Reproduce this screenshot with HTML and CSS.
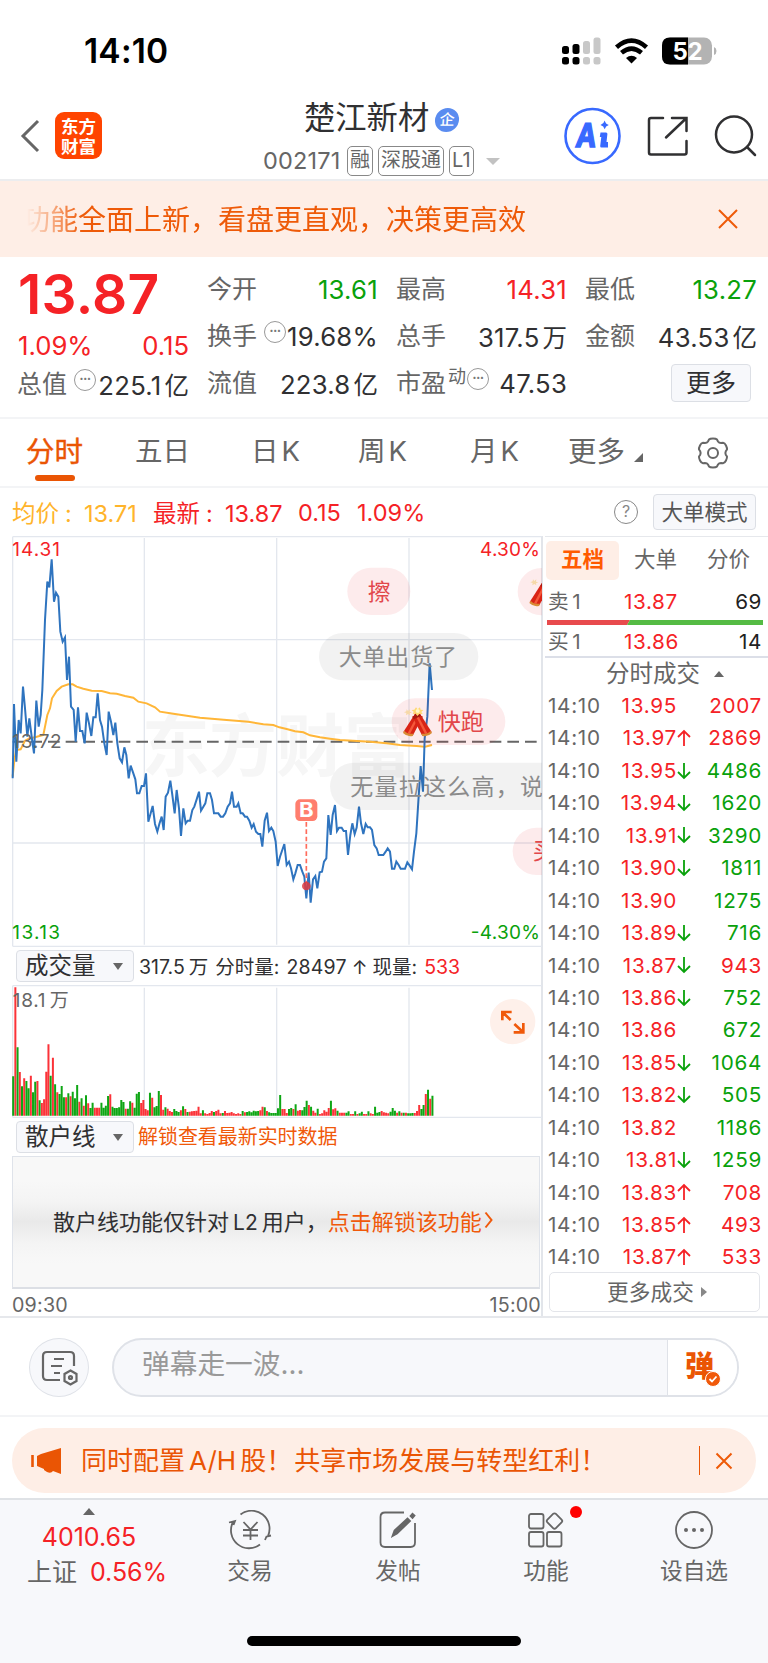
FILE: index.html
```html
<!DOCTYPE html>
<html lang="zh-CN">
<head>
<meta charset="utf-8">
<title>楚江新材 002171</title>
<link rel="stylesheet" href="styles.css">
</head>
<body>
<div class="status">
  <span class="clock">14:10</span>
  <svg class="status-icons" viewBox="0 0 170 34" width="170" height="34">
    <g fill="#000"><rect x="4" y="12" width="7" height="8" rx="2.5"/><rect x="14.500" y="10" width="7" height="10" rx="2.500"/><rect x="4" y="23" width="7" height="7.500" rx="2.500"/><rect x="14.500" y="23" width="7" height="7.500" rx="2.500"/></g>
    <g fill="#c8c8c8"><rect x="25" y="7" width="7" height="13" rx="2.500"/><rect x="35.500" y="3.500" width="7" height="16.500" rx="2.500"/><rect x="25" y="23" width="7" height="7.500" rx="2.500"/><rect x="35.500" y="23" width="7" height="7.500" rx="2.500"/></g>
    <g fill="none" stroke="#000" stroke-width="4.600"><path d="M58.500 13.300Q73.500 0 88.500 13.300"/><path d="M63.500 18.800Q73.500 10.500 83.500 18.800"/></g>
    <path d="M68 24Q73.500 19.500 79 24L73.500 29.500Z"/>
    <rect x="104" y="3.500" width="50" height="27" rx="8" fill="#b3b3b3"/>
    <path d="M130 3.500H112Q104 3.500 104 11.500V22.500Q104 30.500 112 30.500H130Z"/>
    <path d="M156 13Q158.500 14 158.500 17T156 21Z" fill="#b3b3b3"/>
    <text x="114.500" y="25.500" class="battery" textLength="30">52</text>
  </svg>
</div>

<header class="header">
  <svg class="back" width="22" height="36" viewBox="0 0 22 36"><path d="M18 3L3 18 18 33"/></svg>
  <div class="logo"><span>东方</span><span>财富</span></div>
  <div class="title">
    <div class="name"><span>楚江新材</span><i class="badge">企</i></div>
    <div class="code"><span class="num">002171</span><b>融</b><b>深股通</b><b>L1</b><i class="tri-down"></i></div>
  </div>
  <svg class="actions" width="208" height="64" viewBox="0 0 208 64">
    <circle cx="32.500" cy="32" r="27" fill="none" stroke="#3869ff" stroke-width="2.600"/>
    <text transform="translate(15.500 42.500) skewX(-7) scale(.84 1)" class="ai">A</text>
    <path d="M40.500 28.500H46Q47.500 28.500 47.400 30L46.500 38H48V43.500H41.500Q40 43.500 40.200 42L41.300 33H39.800Z" fill="#3869ff"/>
    <path d="M44.700 16.500Q45.500 20 48.800 21 45.500 22 44.700 25.300 43.800 22 40.500 21 43.800 20 44.700 16.500Z" fill="#3869ff"/>
    <g fill="none" stroke="#303032" stroke-width="2.500" stroke-linecap="round"><path d="M103 14H91Q89 14 89 16V48.500Q89 50.500 91 50.500H124.500Q126.500 50.500 126.500 48.500V37M112 14H126.500V27M126.500 14L106 33.500"/><circle cx="174" cy="30.500" r="18"/><path d="M187 43L195 51"/></g>
  </svg>
</header>

<div class="notice">
  <span class="notice-text">功能全面上新，看盘更直观，决策更高效</span>
  <svg width="22" height="22" viewBox="0 0 22 22" class="close"><path d="M2 2L20 20M20 2L2 20"/></svg>
</div>

<section class="quote">
  <div class="q-main">
    <div class="price">13.87</div>
    <div class="pair red change"><span>1.09%</span><span>0.15</span></div>
    <div class="pair"><label>总值</label><i class="dots">•••</i><span>225.1<em>亿</em></span></div>
  </div>
  <div class="q-col">
    <div class="pair green"><label>今开</label><span>13.61</span></div>
    <div class="pair"><label>换手</label><i class="dots mid">•••</i><span>19.68%</span></div>
    <div class="pair"><label>流值</label><span>223.8<em>亿</em></span></div>
  </div>
  <div class="q-col">
    <div class="pair red"><label>最高</label><span>14.31</span></div>
    <div class="pair"><label>总手</label><span>317.5<em>万</em></span></div>
    <div class="pair"><label>市盈<sup>动</sup></label><i class="dots tight">•••</i><span>47.53</span></div>
  </div>
  <div class="q-col">
    <div class="pair green"><label>最低</label><span>13.27</span></div>
    <div class="pair"><label>金额</label><span>43.53<em>亿</em></span></div>
    <div class="pair"><button class="btn more">更多</button></div>
  </div>
</section>

<nav class="tabs">
  <span class="tab active">分时</span><span class="tab">五日</span><span class="tab">日<u>K</u></span><span class="tab">周<u>K</u></span><span class="tab">月<u>K</u></span><span class="tab tab-more">更多<i></i></span>
  <svg width="34" height="34" viewBox="0 0 34 34" class="gear"><path d="M13 3.500Q14 2.500 17 2.500T21 3.500L22 5.500Q23 7 25 7L27 6.800Q28.800 7 30 9.500T31 13.500L29.800 15.300Q29 17 29.800 18.700L31 20.500Q31.200 22 30 24.500T27 27.200L25 27Q23 27 22 28.500L21 30.500Q20 31.500 17 31.500T13 30.500L12 28.500Q11 27 9 27L7 27.200Q5.200 27 4 24.500T3 20.500L4.200 18.700Q5 17 4.200 15.300L3 13.500Q2.800 12 4 9.500T7 6.800L9 7Q11 7 12 5.500Z"/><circle cx="17" cy="17" r="5"/></svg>
</nav>

<div class="info">
  <span class="yellow avg">均价<s>:</s>13.71</span>
  <span class="red latest">最新<s>:</s>13.87</span><span class="red v2">0.15</span><span class="red v3">1.09%</span>
  <i class="help">?</i><button class="btn mode">大单模式</button>
</div>

<main class="board">
  <div class="left">
    <svg class="chart" width="542" height="412" viewBox="0 18 1626 1236">
      <defs>
        <g id="cracker">
          <path d="M14 8L18 13 24 8 23 15 30 17 23 20 24 26 18 22 12 26 13 19 6 17 13 14Z" fill="#f6d9a8"/>
          <g id="tube"><path d="M40 20L62 30 33 86Q20 90 4 76Z" fill="#d92416"/><path d="M46 24L52 27 24 82 17 80Z" fill="#f5583a"/><path d="M40 20L62 30 58 38 36 28Z" fill="#a81a10"/><path d="M7 72Q18 84 35 81L32 88Q16 92 3 79Z" fill="#d98b34"/></g>
        </g>
      </defs>
      <text x="425" y="722" class="watermark" textLength="810">东方财富</text>
      <g class="grid"><path d="M38 20H1626M38 1249H1626M38 20V1249M433 24V1244M830 24V1244M1227 24V1244M38 329H1626M38 939H1626"/></g>
      <path class="base" d="M38 635H1616"/>
      <polyline class="avgline" points="38,740 42,700 48,660 62,658 75,632 88,625 105,622 130,615 142,555 150,535 156,505 170,483 185,470 205,463 218,463 230,470 250,476 275,482 305,483 330,490 350,491 375,498 400,503 415,515 440,520 465,532 480,545 520,551 600,563 680,570 745,575 790,583 820,585 838,592 860,597 885,604 910,607 930,616 960,622 990,626 1020,630 1110,635 1160,640 1200,645 1250,648 1275,650 1296,645"/>
      <polyline class="priceline" points="38,745 42,522 49,695 56,570 62,610 69,470 75,535 82,620 88,565 95,620 102,670 109,512 116,590 122,555 127,480 135,270 142,155 148,172 155,88 162,215 168,188 175,200 181,305 188,335 195,322 201,450 207,380 213,530 221,540 227,635 234,532 240,603 247,603 254,640 260,548 267,580 274,618 280,562 287,562 293,490 300,570 306,590 313,640 320,675 326,545 333,575 340,615 346,578 352,640 359,685 366,697 373,652 379,675 386,745 392,707 399,727 406,748 411,790 418,790 425,768 432,768 438,730 445,875 452,850 458,828 465,882 472,905 478,882 485,860 491,900 497,800 504,788 511,752 517,795 524,850 530,780 537,835 543,918 550,835 557,880 563,872 570,872 577,840 583,830 590,808 597,785 603,842 610,830 616,820 622,790 630,790 636,810 642,850 655,850 662,860 669,860 676,850 683,830 690,820 696,785 702,830 710,830 715,820 722,850 728,850 735,860 741,860 748,872 755,893 761,882 768,905 775,912 781,912 787,950 794,872 801,848 807,903 814,893 820,903 827,935 833,1008 840,980 853,942 860,1005 867,995 873,1015 880,1048 886,1030 893,1005 900,1005 907,1025 913,1040 919,1105 926,1028 932,1118 939,1048 946,1038 952,1075 959,1027 966,1025 972,995 979,985 985,855 992,915 998,855 1005,825 1011,903 1017,893 1025,893 1031,903 1038,903 1044,975 1051,915 1057,880 1064,912 1070,893 1077,830 1083,880 1090,912 1097,882 1103,892 1110,892 1116,900 1123,945 1130,955 1136,975 1150,975 1157,965 1163,955 1170,965 1176,1016 1183,1016 1189,995 1196,1005 1202,1016 1215,1016 1222,997 1229,1007 1236,1018 1242,965 1249,910 1255,815 1262,708 1269,785 1274,625 1282,560 1289,400 1296,480"/>
      <path d="M919 876V1060" stroke="#ff6b5b" stroke-width="5" stroke-dasharray="14 8"/>
      <circle cx="919" cy="1068" r="13" fill="#df3b40" opacity=".85"/>
      <rect x="886" y="808" width="66" height="65" rx="14" fill="#ff7e6d"/>
      <text x="897" y="862" class="buy" textLength="44" lengthAdjust="spacingAndGlyphs">B</text>
      <g fill="#e6141e" fill-opacity=".085"><rect x="1042" y="113" width="189" height="142" rx="71"/><rect x="1175" y="505" width="341" height="140" rx="70"/><rect x="1553" y="114" width="300" height="142" rx="71"/><rect x="1538" y="893" width="300" height="142" rx="71"/></g>
      <g fill="#000" fill-opacity=".05"><rect x="957" y="309" width="478" height="142" rx="71"/><rect x="990" y="698" width="900" height="142" rx="71"/></g>
      <g class="barrage"><text x="1103" y="210" fill="#e2474b">擦</text><text x="1016" y="405" textLength="355">大单出货了</text><text x="1313" y="601" fill="#e2474b" textLength="138">快跑</text><text x="1051" y="795" textLength="578">无量拉这么高，说</text><text x="1598" y="988" fill="#e2474b">买</text></g>
      <g transform="translate(1206 530)"><use href="#cracker"/><use href="#tube" transform="matrix(-1 0 0 1 93 0)"/><path d="M42 2L47 8 54 2 56 9 64 10 58 16 62 22 52 22 46 28 41 21 32 22 35 15 29 10 37 9Z" fill="#ffd873"/><circle cx="47" cy="13" r="6" fill="#fff6c8"/></g>
      <use href="#cracker" transform="translate(1585 140)"/>
      <g class="axis"><text x="37" y="77" fill="#f52226" textLength="143">14.31</text><text x="37" y="654" textLength="148">13.72</text><text x="37" y="1228" fill="#09a10b" textLength="143">13.13</text><text x="1440" y="77" fill="#f52226" textLength="180">4.30%</text><text x="1412" y="1228" fill="#09a10b" textLength="208">-4.30%</text></g>
    </svg>
    <div class="sub-head"><button class="btn select">成交量<i></i></button><span class="vol-info">317.5<em>万</em><span class="minute">分时量:</span><span class="cnt">28497</span><span class="arr">↑</span><span class="now">现量:</span><span class="red">533</span></span></div>
    <div class="vol">
      <svg id="volume" width="542" height="133" viewBox="0 120 1626 399"><g class="grid"><path d="M38 122H1626M38 517H1626M38 122V517M433 128V512M830 128V512M1227 128V512"/></g><path id="bars-up" stroke="#fb3238" stroke-width="6"/><path id="bars-down" stroke="#0ea614" stroke-width="6"/><g class="axis"><text x="38" y="185" textLength="168">18.1<tspan dx="10">万</tspan></text></g>
      <circle cx="1538" cy="230" r="68" fill="#fef0ea"/><path d="M1507 226V201H1535M1508 202L1532 225M1570 234V262H1541M1569 261L1543 237" fill="none" stroke="#f0590a" stroke-width="8"/></svg>
    </div>
    <div class="sub-head"><button class="btn select">散户线<i></i></button><span class="unlock">解锁查看最新实时数据</span></div>
    <div class="retail"><span>散户线功能仅针对<u>L2</u>用户，</span><span class="link">点击解锁该功能</span><svg width="9" height="18" viewBox="0 0 9 18"><path d="M1.500 1.500L7.500 9 1.500 16.500"/></svg></div>
    <div class="times"><span>09:30</span><span>15:00</span></div>
  </div>
  <aside class="right">
    <div class="seg"><b>五档</b><span>大单</span><span>分价</span></div>
    <div class="lvl"><span><em>卖</em>1</span><span class="red">13.87</span><span>69</span></div>
    <svg class="ratio" width="216" height="5" viewBox="0 0 216 5"><path d="M0 0H83L80 5H0Z" fill="#e84a4d"/><path d="M83 0H216V5H80Z" fill="#55bb44"/></svg>
    <div class="lvl buy1"><span><em>买</em>1</span><span class="red">13.86</span><span>14</span></div>
    <div class="deal-title">分时成交<i></i></div>
    <div class="deals" id="deals"></div>
    <button class="more-deals">更多成交<i></i></button>
  </aside>
</main>

<div class="comment">
  <div class="round"><svg width="38" height="38" viewBox="0 0 38 38"><path d="M20 31H7Q3 31 3 27V7Q3 3 7 3H30Q34 3 34 7V17M14 10H24M11 17H22M14 24H20" /><path d="M30.500 21.500L36.500 25V32L30.500 35.500 24.500 32V25Z"/><circle cx="30.500" cy="28.500" r="1.500"/></svg></div>
  <div class="field"><span>弹幕走一波...</span><div class="send"><b>弹</b><svg width="16" height="16" viewBox="0 0 16 16"><circle cx="8" cy="8" r="7.500" fill="#f0590a" stroke="#fff"/><path d="M4.500 8L7 10.500 11.500 5.500" fill="none" stroke="#fff" stroke-width="1.800"/></svg></div></div>
</div>

<div class="promo-wrap"><div class="promo">
  <svg width="32" height="28" viewBox="0 0 32 28"><path d="M1.500 8V20" stroke="#ea5504" stroke-width="2.600"/><path d="M6 9L10 7 30 1V27L22 24Q20 27 16 25L13 23V22L6 19Z" fill="#ea5504"/></svg>
  <span>同时配置<u>A/H</u>股！</span><span class="promo-2">共享市场发展与转型红利！</span>
  <i class="bar"></i><svg class="x" width="18" height="18" viewBox="0 0 18 18"><path d="M1.500 1.500L16.500 16.500M16.500 1.500L1.500 16.500"/></svg>
</div></div>

<footer class="tabbar">
  <div class="index red"><i></i><span>4010.65</span><span><em>上证</em>0.56%</span></div>
  <div class="item"><svg width="44" height="40" viewBox="0 0 44 40"><path d="M12.500 4.500A18 18 0 0 1 40 26M37 30L38.500 26.500 43 25.500M32 34.500A18 18 0 0 1 5 12M1 12.500L7 11 5.500 15"/><path d="M15.500 12L22.500 19.500 29.500 12M22.500 19V30M15 20H30M15 25.500H30" /></svg><span>交易</span></div>
  <div class="item"><svg width="44" height="40" viewBox="0 0 44 40"><path d="M28 2.500H9Q4.500 2.500 4.500 7V32.500Q4.500 37 9 37H34.500Q39 37 39 32.500V13"/><path d="M16.500 26L18.500 20.500 31.500 8.500 34 11 21 23.500ZM34.500 6L36.500 3.800 38.500 5.500 36.500 8Z" fill="#666" /></svg><span>发帖</span></div>
  <div class="item"><svg width="44" height="40" viewBox="0 0 44 40"><rect x="5" y="4" width="14.500" height="14.500" rx="2"/><rect x="5" y="22" width="14.500" height="14.500" rx="2"/><rect x="23" y="22" width="14.500" height="14.500" rx="2"/><rect x="24.500" y="5" width="12" height="12" rx="2" transform="rotate(45 30.500 11)"/></svg><i class="dot"></i><span>功能</span></div>
  <div class="item last"><svg width="44" height="40" viewBox="0 0 44 40"><circle cx="22" cy="20" r="18"/><g fill="#666" stroke="none"><circle cx="14" cy="20" r="2"/><circle cx="22" cy="20" r="2"/><circle cx="30" cy="20" r="2"/></g></svg><span>设自选</span></div>
  <div class="home"></div>
</footer>
<script src="app.js"></script>
</body>
</html>
```

FILE: styles.css
```css
* { box-sizing: border-box; }
body { margin: 0; width: 768px; height: 1663px; overflow: hidden; background: #fff; color: #303032; font-family: Inter, "Noto Sans CJK SC", sans-serif; font-feature-settings: "calt" 0; }
i, em, u, s { font-style: normal; text-decoration: none; }
button { font-family: inherit; padding: 0; margin: 0; }
svg { display: block; flex: none; }
.red { color: #f52226; }
.green { color: #09a10b; }
.yellow { color: #ffb42b; }
.btn { border: 1px solid #dcdfe5; border-radius: 4px; background: #f7f8fb; color: #303032; }

.status { height: 101px; display: flex; justify-content: space-between; padding: 31px 40px 0 84px; }
.clock { font-weight: 600; font-size: 33.500px; line-height: 40px; color: #000; letter-spacing: .2px; }
.status-icons { margin-top: 3px; }
.battery { font: 700 24px Inter, sans-serif; fill: #fff; }

.header { height: 80px; border-bottom: 2px solid #ecedef; display: flex; padding-left: 20px; }
.back { margin-top: 17px; }
.back path { fill: none; stroke: #666; stroke-width: 3; }
.logo { width: 47px; height: 47px; margin: 11px 0 0 13px; border-radius: 9px; background: #ff4400; color: #fff; font: 700 17.500px/20px "Noto Sans CJK SC", sans-serif; display: flex; flex-direction: column; align-items: center; justify-content: center; }
.title { width: 250px; margin-left: 161px; display: flex; flex-direction: column; }
.name { height: 38px; display: flex; align-items: center; padding-left: 41px; font-size: 31.300px; }
.name span { line-height: 34px; margin-top: -4px; }
.badge { width: 24px; height: 24px; border-radius: 50%; background: #5a8cf0; color: #fff; font: 500 15px/22px "Noto Sans CJK SC", sans-serif; text-align: center; margin-left: 6px; transform: skewX(-4deg); }
.code { height: 30px; margin-top: 7px; display: flex; align-items: center; color: #666; font-size: 23.500px; gap: 5px; }
.code .num { width: 79px; letter-spacing: .2px; margin-top: -2px; }
.code b { font-weight: 400; font-size: 20px; line-height: 27px; height: 30px; border: 1.500px solid #888; border-radius: 5px; padding: 0 2px; }
.tri-down { border: 7px solid transparent; border-top-color: #c2c2c2; border-bottom: 0; margin-left: 7px; }
.actions { margin: 3px 0 0 47px; }
.ai { font: 700 33px "Noto Sans", sans-serif; fill: #3869ff; stroke: #3869ff; stroke-width: 1.500; }

.notice { height: 76px; background: #feeee6; display: flex; align-items: center; justify-content: space-between; padding: 0 29px 0 22px; color: #ee5a08; }
.notice-text { font-size: 28px; margin-top: -3px; -webkit-mask-image: linear-gradient(90deg, transparent 5px, #000 60px); mask-image: linear-gradient(90deg, transparent 5px, #000 60px); }
.close path, .x path { fill: none; stroke: #ee5a08; stroke-width: 2; }

.quote { height: 162px; border-bottom: 2px solid #f3f4f6; display: grid; grid-template-columns: 171px 170px 170px 171px; column-gap: 19px; padding: 9px 0 0 18px; }
.pair { height: 47px; display: flex; align-items: center; font-size: 25.700px; letter-spacing: .25px; white-space: nowrap; }
.pair span:last-child { margin-left: auto; }
.pair:not(.red):not(.green) span { color: #303032; }
.pair em { margin-left: 3px; font-size: 24.500px; letter-spacing: 0; }
.pair label { color: #666; letter-spacing: 0; font-size: 25px; margin-left: -1px; line-height: 36px; margin-top: -1px; }
.price { height: 59px; font-size: 55px; line-height: 56px; font-weight: 600; color: #f52226; letter-spacing: .3px; }
.change { height: 36px; padding-top: 4px; letter-spacing: 0; }
.q-main .pair:last-child { height: 46px; }
.dots { width: 22px; height: 22px; border: 1.500px solid #999; border-radius: 50%; font-size: 7px; line-height: 18px; letter-spacing: -.2px; text-align: center; color: #777; margin: -9px 0 0 7px; flex: none; }
.q-main .dots { margin-right: -2px; }
.dots.tight { margin-left: 1px; }
.pair sup { font-size: 18px; line-height: 0; vertical-align: 9px; margin-left: 2px; }
.more { width: 80px; height: 38px; margin: -1px 6px 0 auto; font-size: 25px; line-height: 32px; }

.tabs { height: 69px; border-bottom: 2px solid #f3f4f6; display: flex; align-items: center; color: #666; font-size: 27.500px; padding-left: 26px; }
.tab { width: 109px; height: 67px; line-height: 65px; white-space: nowrap; flex: none; }
.tab u { margin-left: 3px; }
.tab.active { color: #ea5504; position: relative; -webkit-text-stroke: .4px #ea5504; font-size: 28.500px; }
.tab.active::after { content: ""; position: absolute; left: 9px; top: 56px; width: 40px; height: 6px; border-radius: 3px; background: #ea5504; }
.tab:nth-child(3) { padding-left: 7px; }
.tab:nth-child(4) { padding-left: 5px; }
.tab:nth-child(5) { padding-left: 8px; }
.tab-more { width: 129px; margin-left: -3px; font-size: 28.500px; }
.tab-more i { display: inline-block; border-left: 9px solid transparent; border-bottom: 9px solid #666; margin-left: 9px; }
.gear { margin-left: -1px; }
.gear path, .gear circle { fill: none; stroke: #666; stroke-width: 2; }

.info { height: 48px; display: flex; align-items: center; padding-left: 12px; font-size: 23.500px; white-space: nowrap; }
.info > span { flex: none; }
.info s { display: inline-block; width: 25px; padding-left: 6px; }
.avg { width: 141px; }
.latest { width: 145px; }
.v2 { width: 59px; }
.v3 { width: 257px; }
.help { width: 24px; height: 24px; border: 1.500px solid #888; border-radius: 50%; font-size: 16px; line-height: 21px; text-align: center; color: #888; flex: none; }
.mode { margin-left: 15px; width: 103px; height: 36px; font-size: 21.500px; line-height: 32px; color: #555; flex: none; }

.board { display: flex; height: 782px; border-bottom: 2px solid #e6e8ec; }
.left { width: 543px; border-right: 2px solid #e2e5ea; flex: none; }
.right { width: 225px; padding-left: 2px; flex: none; }
.grid path { fill: none; stroke: #e3e7ee; stroke-width: 4; }
.base { stroke: #666; stroke-width: 6; stroke-dasharray: 35 18; fill: none; }
.priceline { fill: none; stroke: #2f74bf; stroke-width: 6; }
.avgline { fill: none; stroke: #ffb638; stroke-width: 6; }
.watermark { font: 700 204px "Noto Sans CJK SC", sans-serif; fill: #f6f6f6; }
.buy { font: 700 60px Inter, sans-serif; fill: #fff; }
.barrage text { font: 400 69px "Noto Sans CJK SC", sans-serif; }
.barrage text:not([fill]) { fill: #8b8b8b; }
.axis text { font: 400 57px Inter, "Noto Sans CJK SC", sans-serif; }
.axis text:not([fill]) { fill: #666; }
.sub-head { height: 37px; padding: 2px 0 0 16px; display: flex; }
.select { width: 118px; height: 32px; font-size: 23.500px; line-height: 30px; display: flex; align-items: center; padding-left: 8px; flex: none; }
.select i { border: 5px solid transparent; border-top: 7px solid #666; border-bottom: 0; margin-left: 17px; }
.vol-info { margin-left: 5px; font-size: 19.500px; line-height: 34px; white-space: nowrap; }
.vol-info em { margin-left: 4px; }
.minute { margin-left: 7px; }
.cnt { margin: 0 5px 0 7px; letter-spacing: .2px; }
.now { margin: 0 7px 0 5px; }
.arr { font-size: 19px; }
.vol { height: 133px; }
.unlock { margin-left: 4px; font-size: 19.950px; line-height: 33px; color: #f0590a; }
.vol + .sub-head { padding-top: 3px; height: 38px; }
.retail { height: 133px; margin-left: 12px; margin-right: 1px; border: 1px solid #dfe3ea; border-bottom: 2px solid #dcdfe5; background: linear-gradient(#f8f8f8 18%, #f4f4f4 34%, #e9e9e9 50%, #f4f4f4 66%, #f8f8f8 82%); display: flex; align-items: center; padding: 0 0 5px 40px; font-size: 22px; white-space: nowrap; }
.retail u { margin: 0 4px; font-size: 21px; }
.link { color: #f0590a; }
.retail svg { margin-left: 2px; }
.retail path { fill: none; stroke: #f0590a; stroke-width: 2; }
.times { display: flex; justify-content: space-between; padding: 3px 0 0 12px; font-size: 19.700px; line-height: 26px; color: #666; letter-spacing: .2px; }

.seg { height: 47px; padding: 4px 0 0 1px; display: flex; font-size: 21.500px; line-height: 36px; color: #666; border-top: 1px solid #e6e8ec; }
.seg b { width: 73px; height: 39px; margin-right: 15px; border-radius: 5px; background: #feeee6; color: #ff5a00; text-align: center; font-weight: 700; flex: none; }
.seg span { width: 73px; flex: none; }
.seg span:last-child { width: 45px; }
.lvl, .deal { display: grid; grid-template-columns: 76px 60px 1fr; padding: 0 6px 0 3px; font-size: 20.700px; color: #666; }
.lvl { height: 37px; line-height: 37px; letter-spacing: .6px; }
.lvl em { margin-right: 3px; }
.lvl span:last-child { text-align: right; color: #222; }
.ratio { margin-left: 2px; }
.buy1 { height: 31px; line-height: 34px; }
.deal-title { border-top: 2px solid #dcdfe8; height: 33px; padding-left: 61px; font-size: 23.500px; line-height: 33px; color: #666; display: flex; align-items: center; }
.deal-title i { border: 5.500px solid transparent; border-bottom: 6px solid #666; border-top: 0; margin-left: 14px; }
.deals { height: 583px; }
.deal { height: 32.450px; line-height: 33.450px; grid-template-columns: 57px 72px 16px 1fr; letter-spacing: .7px; }
.deal .p { text-align: right; color: #f52226; }
.deal .v { text-align: right; letter-spacing: .7px; }
.deal svg { align-self: center; fill: none; stroke: currentColor; stroke-width: 1.800; }
.more-deals { display: flex; align-items: center; justify-content: center; width: 211px; height: 40px; margin-left: 4px; padding-left: 5px; border: 1px solid #e3e5ea; border-radius: 5px; background: #fff; font-size: 21.700px; line-height: 36px; color: #666; }
.more-deals i { border: 5px solid transparent; border-left: 6px solid #888; border-right: 0; margin-left: 7px; }

.comment { height: 99px; border-bottom: 2px solid #f3f4f6; display: flex; padding: 20px 0 0 29px; }
.round { width: 60px; height: 59px; border: 1.500px solid #dfe2e8; border-radius: 50%; background: #f7f8fb; padding: 10px 0 0 10px; flex: none; }
.round svg { fill: none; stroke: #666; stroke-width: 2.200; }
.field { margin-left: 23px; width: 627px; height: 59px; border: 2px solid #dfe2e8; border-radius: 30px; background: #f7f8fb; overflow: hidden; display: flex; justify-content: space-between; color: #999; font-size: 27.700px; line-height: 49px; padding-left: 28px; }
.send { width: 70px; background: #fff; border-left: 1.500px solid #dfe2e8; color: #ea5504; position: relative; padding-left: 17px; }
.send b { font-size: 29px; line-height: 53px; font-weight: 900; }
.send svg { position: absolute; left: 37px; top: 31px; }

.promo-wrap { height: 81px; padding: 11px 12px; }
.promo { height: 65px; border-radius: 33px; background: #feeee6; display: flex; align-items: center; padding-left: 19px; color: #ea5504; font-size: 26px; white-space: nowrap; }
.promo > span { margin-left: 18px; line-height: 60px; }
.promo u { margin: 0 4px; }
.promo .promo-2 { margin-left: 2px; }
.bar { width: 1.500px; height: 29px; background: #ea5504; margin-left: auto; }
.promo .x { margin: 0 23px 0 15px; }

.tabbar { height: 166px; background: #f7f8fb; border-top: 2px solid #dfe2e6; position: relative; display: flex; }
.index { width: 176px; padding: 8px 0 0 8px; display: flex; flex-direction: column; align-items: center; font-size: 25px; line-height: 35px; }
.index i { border: 6.500px solid transparent; border-bottom: 7px solid #666; border-top: 0; margin: 0 0 5px -6px; }
.index span:nth-child(2) { margin-left: -6px; }
.index span { margin-left: 10px; }
.index em { color: #666; margin-right: 13px; }
.item { width: 148px; display: flex; flex-direction: column; align-items: center; position: relative; padding-top: 10px; font-size: 22.700px; line-height: 34px; color: #666; }
.item svg { fill: none; stroke: #666; stroke-width: 1.800; margin-bottom: 4px; }
.dot { position: absolute; left: 98px; top: 6px; width: 12px; height: 12px; border-radius: 50%; background: #f00; }
.home { position: absolute; left: 247px; top: 136px; width: 274px; height: 10px; border-radius: 5px; background: #000; }
```

FILE: app.js
```js
const volume = 'g394 r127 g307 r381 g424 r400 g408 g430 r392 g442 g410 r408 g466 r474 r463 r380 r298 g392 r338 g418 r442 g447 g423 g457 r457 g445 r454 g440 g460 g420 r470 g460 r482 g451 r475 g489 g473 r488 r488 r488 g473 g488 g482 g453 r448 g485 g489 g489 g487 g465 g471 r491 g491 g469 r473 g488 g446 g441 r474 r465 r492 r496 g443 r458 g487 g483 g438 r450 r494 g487 r491 r498 r501 g492 g498 g501 r496 g484 r492 g501 r500 r499 r498 r497 r485 r505 g496 r505 r507 r504 r498 g501 r498 r494 r505 g504 r498 r504 r503 r501 r505 r507 r505 r507 g498 r502 g501 g499 g502 g497 g499 g498 r496 r485 g487 r498 g502 g504 g504 g504 g490 g450 r492 r492 r504 g492 g489 r492 g478 r497 r495 g496 g486 g467 r480 g485 r497 r503 g491 r507 r505 r496 r500 r489 g467 r493 r490 g497 r503 r503 r503 g503 g499 r507 r507 g499 r507 g505 g500 r507 r507 g499 r505 r507 g485 g503 g501 r498 r502 r503 r505 g500 g489 g497 r503 g499 r503 g503 r503 g505 g505 g504 r504 r498 r480 g492 g480 r447 g434 r461 g452'.split(' ');
const paths = { r: '', g: '' };
volume.forEach((bar, i) => {
  paths[bar[0]] += `M${(39.5 + i * 6.62).toFixed(1)} 512V${bar.slice(1)}`;
});
document.getElementById('bars-up').setAttribute('d', paths.r);
document.getElementById('bars-down').setAttribute('d', paths.g);

const deals = [
  ['13.95', '', 2007, 'red'], ['13.97', 'up', 2869, 'red'], ['13.95', 'down', 4486, 'green'],
  ['13.94', 'down', 1620, 'green'], ['13.91', 'down', 3290, 'green'], ['13.90', 'down', 1811, 'green'],
  ['13.90', '', 1275, 'green'], ['13.89', 'down', 716, 'green'], ['13.87', 'down', 943, 'red'],
  ['13.86', 'down', 752, 'green'], ['13.86', '', 672, 'green'], ['13.85', 'down', 1064, 'green'],
  ['13.82', 'down', 505, 'green'], ['13.82', '', 1186, 'green'], ['13.81', 'down', 1259, 'green'],
  ['13.83', 'up', 708, 'red'], ['13.85', 'up', 493, 'red'], ['13.87', 'up', 533, 'red']
];
const arrows = {
  up: '<svg class="red" width="14" height="18" viewBox="0 0 14 18"><path d="M7 17V2M1 8L7 2 13 8"/></svg>',
  down: '<svg class="green" width="14" height="18" viewBox="0 0 14 18"><path d="M7 1V16M1 10L7 16 13 10"/></svg>',
  '': '<span></span>'
};
document.getElementById('deals').innerHTML = deals.map(([price, dir, vol, tone]) =>
  `<div class="deal"><span>14:10</span><span class="p">${price}</span>${arrows[dir]}<span class="v ${tone}">${vol}</span></div>`
).join('');
```
